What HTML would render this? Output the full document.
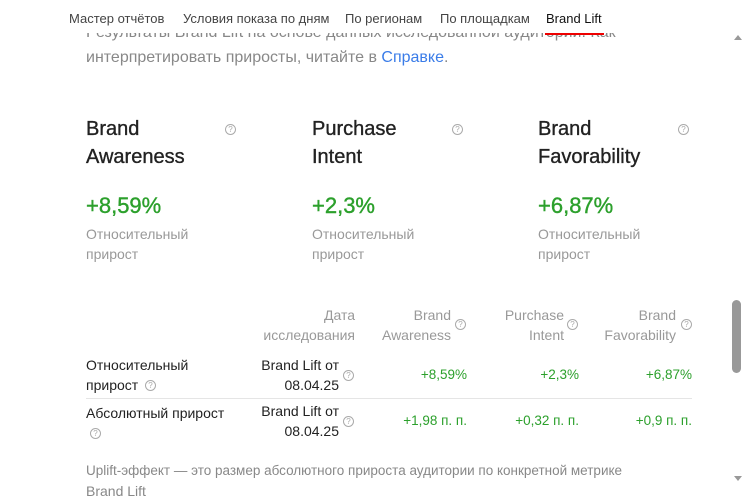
<!DOCTYPE html>
<html><head><meta charset="utf-8"><style>
*{margin:0;padding:0;box-sizing:border-box}
body{width:751px;height:491px;overflow:hidden;background:#fff;font-family:"Liberation Sans","Noto Sans CJK SC",sans-serif;position:relative;color:#222}
.a{position:absolute;white-space:nowrap}
.tabs{position:absolute;left:0;top:0;width:728px;height:33px;background:#fff;z-index:5}
.tab{position:absolute;top:11px;font-size:13px;color:#444}
.g{color:#888}
.q{position:absolute;width:11px;height:11px;border:1px solid #aaa;border-radius:50%;font-size:8px;line-height:9px;text-align:center;color:#aaa}
.h{font-size:20px;line-height:28px;color:#222;-webkit-text-stroke:0.35px #222}
.big{font-size:22px;color:#2ca02c;-webkit-text-stroke:0.4px #2ca02c}
.sub{font-size:14px;line-height:20px;color:#999}
.th{font-size:14px;line-height:20px;color:#999;text-align:right}
.td{font-size:14px;line-height:20px;color:#222}
.gv{font-size:13.5px;color:#2ca02c;text-align:right}
</style></head><body>
<div class="tabs">
<div class="tab" style="left:69px">Мастер отчётов</div>
<div class="tab" style="left:183px">Условия показа по дням</div>
<div class="tab" style="left:345px">По регионам</div>
<div class="tab" style="left:440px">По площадкам</div>
<div class="tab" style="left:546px;color:#111">Brand Lift</div>
<div style="position:absolute;left:545px;top:33px;width:59px;height:2px;background:#e00"></div>
</div>
<div class="a g" style="left:86px;top:24px;font-size:16px">Результаты Brand Lift на основе данных исследованной аудитории. Как</div>
<div class="a g" style="left:86px;top:49px;font-size:16px">интерпретировать приросты, читайте в <span style="color:#3a7ce8">Справке</span>.</div>

<div class="a h" style="left:86px;top:115px">Brand<br>Awareness</div>
<div class="q" style="left:225px;top:124px">?</div>
<div class="a big" style="left:86px;top:193px">+8,59%</div>
<div class="a sub" style="left:86px;top:224px">Относительный<br>прирост</div>

<div class="a h" style="left:312px;top:115px">Purchase<br>Intent</div>
<div class="q" style="left:452px;top:124px">?</div>
<div class="a big" style="left:312px;top:193px">+2,3%</div>
<div class="a sub" style="left:312px;top:224px">Относительный<br>прирост</div>

<div class="a h" style="left:538px;top:115px">Brand<br>Favorability</div>
<div class="q" style="left:678px;top:124px">?</div>
<div class="a big" style="left:538px;top:193px">+6,87%</div>
<div class="a sub" style="left:538px;top:224px">Относительный<br>прирост</div>

<div class="a th" style="right:396px;top:305px">Дата<br>исследования</div>
<div class="a th" style="right:300px;top:305px">Brand<br>Awareness</div>
<div class="q" style="left:455px;top:319px">?</div>
<div class="a th" style="right:187px;top:305px">Purchase<br>Intent</div>
<div class="q" style="left:567px;top:319px">?</div>
<div class="a th" style="right:75px;top:305px">Brand<br>Favorability</div>
<div class="q" style="left:681px;top:319px">?</div>

<div class="a td" style="left:86px;top:355px">Относительный<br>прирост</div>
<div class="q" style="left:145px;top:380px">?</div>
<div class="a td" style="right:412px;top:355px;text-align:right">Brand Lift от<br>08.04.25</div>
<div class="q" style="left:343px;top:370px">?</div>
<div class="a gv" style="right:284px;top:367px">+8,59%</div>
<div class="a gv" style="right:172px;top:367px">+2,3%</div>
<div class="a gv" style="right:59px;top:367px">+6,87%</div>
<div class="a" style="left:86px;top:398px;width:606px;height:1px;background:#e5e5e5"></div>

<div class="a td" style="left:86px;top:403px">Абсолютный прирост</div>
<div class="q" style="left:90px;top:428px">?</div>
<div class="a td" style="right:412px;top:401px;text-align:right">Brand Lift от<br>08.04.25</div>
<div class="q" style="left:343px;top:416px">?</div>
<div class="a gv" style="right:284px;top:413px">+1,98 п. п.</div>
<div class="a gv" style="right:172px;top:413px">+0,32 п. п.</div>
<div class="a gv" style="right:59px;top:413px">+0,9 п. п.</div>

<div class="a" style="left:86px;top:463px;font-size:13.5px;color:#888">Uplift-эффект — это размер абсолютного прироста аудитории по конкретной метрике</div>
<div class="a" style="left:86px;top:483px;font-size:14px;color:#888">Brand Lift</div>

<div class="a" style="left:728px;top:0;width:23px;height:491px;background:#fff"></div>
<div class="a" style="left:734px;top:35px;width:0;height:0;border-left:4px solid transparent;border-right:4px solid transparent;border-bottom:5px solid #999"></div>
<div class="a" style="left:734px;top:476px;width:0;height:0;border-left:4px solid transparent;border-right:4px solid transparent;border-top:5px solid #999"></div>
<div class="a" style="left:732px;top:300px;width:9px;height:73px;background:#999;border-radius:5px"></div>
</body></html>
